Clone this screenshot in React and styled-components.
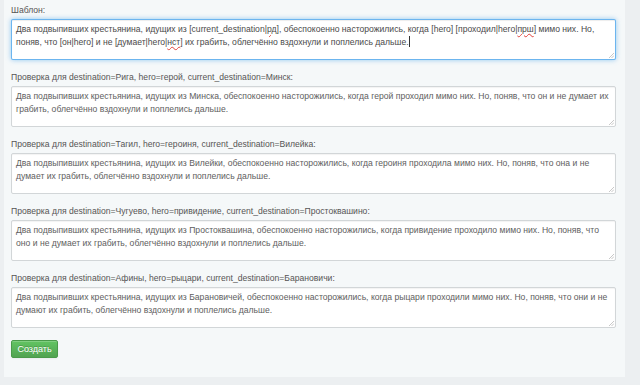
import React from "react";
import styled, { createGlobalStyle } from "styled-components";

const Global = createGlobalStyle`
  html, body { margin: 0; padding: 0; background: #eceff1; }
  body { font-family: "Liberation Sans", Arial, sans-serif; }
`;

const Page = styled.div`
  display: flex;
  padding-left: 4px;
  width: 640px;
  box-sizing: border-box;
`;

const Panel = styled.form`
  width: 621px;
  box-sizing: border-box;
  background: #f5f8f9;
  padding: 4px 9px 19px 7px;
  display: flex;
  flex-direction: column;
`;

const Group = styled.div`
  display: flex;
  flex-direction: column;
  margin-bottom: 11px;
`;

const Label = styled.label`
  font-size: 8.6px;
  line-height: 12px;
  color: #555;
  margin-bottom: 3px;
`;

const Box = styled.div`
  position: relative;
  box-sizing: border-box;
  height: 41px;
  background: #fff;
  border: 1px solid ${(p) => (p.$focus ? "rgba(82,168,236,0.85)" : "#d2d6d8")};
  box-shadow: ${(p) =>
    p.$focus
      ? "inset 0 1px 1px rgba(0,0,0,.075), 0 0 5px rgba(82,168,236,.6)"
      : "inset 0 1px 1px rgba(0,0,0,.05)"};
  border-radius: 2px;
  padding: 3px 4px;
  font-size: 8.6px;
  line-height: 12.5px;
  color: ${(p) => (p.$focus ? "#4a4a4a" : "#5e5e5e")};
  overflow: hidden;
`;

const Squiggle = styled.span`
  text-decoration: underline wavy #e0403a;
  text-decoration-thickness: 0.6px;
  text-underline-offset: 1px;
`;

const Caret = styled.span`
  display: inline-block;
  width: 0;
  height: 11px;
  border-left: 1px solid #333;
  vertical-align: -2px;
`;

const Grip = styled.svg`
  position: absolute;
  right: 1px;
  bottom: 1px;
  width: 6px;
  height: 6px;
`;

const Button = styled.button`
  align-self: flex-start;
  margin-top: 1px;
  width: 47px;
  height: 18px;
  box-sizing: border-box;
  padding: 0;
  font-family: "Liberation Sans", Arial, sans-serif;
  font-size: 9px;
  color: #fff;
  text-shadow: 0 -1px 0 rgba(0,0,0,0.2);
  background: linear-gradient(to bottom, #62c462, #51a351);
  border: 1px solid #4a9a4a;
  border-radius: 2px;
  box-shadow: inset 0 1px 0 rgba(255,255,255,.2), 0 1px 2px rgba(0,0,0,.05);
`;

const GripIcon = () => (
  <Grip viewBox="0 0 6 6">
    <path d="M6 1 L1 6 M6 3.5 L3.5 6" stroke="#b0b0b0" strokeWidth="0.7" />
  </Grip>
);

const checks = [
  {
    label: "Проверка для destination=Рига, hero=герой, current_destination=Минск:",
    text: "Два подвыпивших крестьянина, идущих из Минска, обеспокоенно насторожились, когда герой проходил мимо них. Но, поняв, что он и не думает их грабить, облегчённо вздохнули и поплелись дальше.",
  },
  {
    label: "Проверка для destination=Тагил, hero=героиня, current_destination=Вилейка:",
    text: "Два подвыпивших крестьянина, идущих из Вилейки, обеспокоенно насторожились, когда героиня проходила мимо них. Но, поняв, что она и не думает их грабить, облегчённо вздохнули и поплелись дальше.",
  },
  {
    label: "Проверка для destination=Чугуево, hero=привидение, current_destination=Простоквашино:",
    text: "Два подвыпивших крестьянина, идущих из Простоквашина, обеспокоенно насторожились, когда привидение проходило мимо них. Но, поняв, что оно и не думает их грабить, облегчённо вздохнули и поплелись дальше.",
  },
  {
    label: "Проверка для destination=Афины, hero=рыцари, current_destination=Барановичи:",
    text: "Два подвыпивших крестьянина, идущих из Барановичей, обеспокоенно насторожились, когда рыцари проходили мимо них. Но, поняв, что они и не думают их грабить, облегчённо вздохнули и поплелись дальше.",
  },
];

export default function App() {
  return (
    <>
      <Global />
      <Page>
        <Panel onSubmit={(e) => e.preventDefault()}>
          <Group>
            <Label>Шаблон:</Label>
            <Box $focus role="textbox">
              Два подвыпивших крестьянина, идущих из [current_destination|<Squiggle>рд</Squiggle>], обеспокоенно насторожились, когда [hero] [проходил|hero|<Squiggle>прш</Squiggle>] мимо них. Но, поняв, что [он|hero] и не [думает|hero|<Squiggle>нст</Squiggle>] их грабить, облегчённо вздохнули и поплелись дальше.<Caret />
              <GripIcon />
            </Box>
          </Group>
          {checks.map((c) => (
            <Group key={c.label}>
              <Label>{c.label}</Label>
              <Box role="textbox">
                {c.text}
                <GripIcon />
              </Box>
            </Group>
          ))}
          <Button type="submit">Создать</Button>
        </Panel>
      </Page>
    </>
  );
}
